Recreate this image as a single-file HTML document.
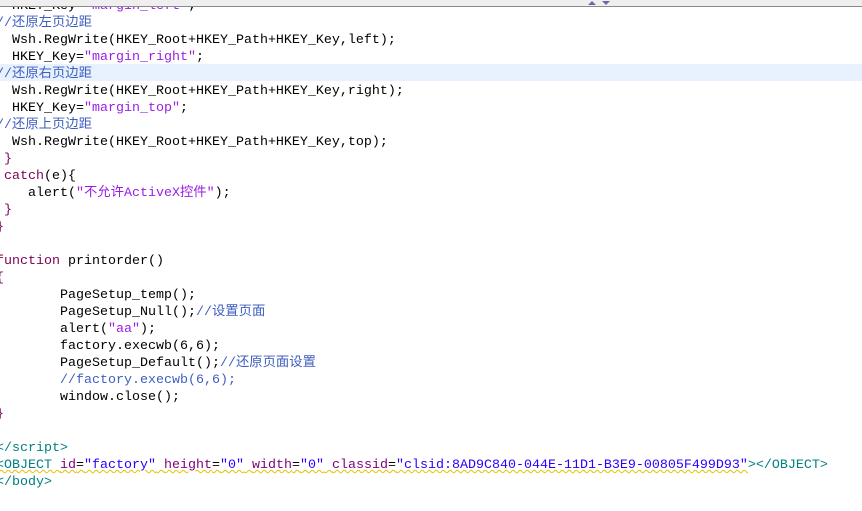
<!DOCTYPE html>
<html><head><meta charset="utf-8"><style>
body{margin:0;width:862px;height:511px;overflow:hidden;background:#fff;position:relative;font-family:"Liberation Mono","Noto Sans CJK SC",monospace;font-size:13.33px;}
.top{position:absolute;left:0;top:0;width:862px;height:6px;background:#efefef;border-bottom:1px solid #8a8a8a;}
.tri{position:absolute;top:1px;width:0;height:0;border-left:4px solid transparent;border-right:4px solid transparent;}
.hl{position:absolute;left:0;top:64px;width:862px;height:17px;background:#e8f2fe;}
pre{position:absolute;left:-4px;top:-2px;margin:0;font:inherit;line-height:17px;color:#000;}
.k{color:#7f0055}.s{color:#9a1ee6}.c{color:#3f5fbf}.t{color:#008080}.a{color:#7f007f}.v{color:#2a00ff}
.sq{text-decoration:underline wavy #e8c000;text-decoration-thickness:1px;}
</style></head><body>
<div class="hl"></div>
<pre>  HKEY_Key=<span class="s">"margin_left"</span>;
<span class="c">//还原左页边距</span>
  Wsh.RegWrite(HKEY_Root+HKEY_Path+HKEY_Key,left);
  HKEY_Key=<span class="s">"margin_right"</span>;
<span class="c">//还原右页边距</span>
  Wsh.RegWrite(HKEY_Root+HKEY_Path+HKEY_Key,right);
  HKEY_Key=<span class="s">"margin_top"</span>;
<span class="c">//还原上页边距</span>
  Wsh.RegWrite(HKEY_Root+HKEY_Path+HKEY_Key,top);
 <span class="k">}</span>
 <span class="k">catch</span>(e){
    alert(<span class="s">"不允许ActiveX控件"</span>);
 <span class="k">}</span>
<span class="k">}</span>

<span class="k">function</span> printorder()
<span class="k">{</span>
        PageSetup_temp();
        PageSetup_Null();<span class="c">//设置页面</span>
        alert(<span class="s">"aa"</span>);
        factory.execwb(6,6);
        PageSetup_Default();<span class="c">//还原页面设置</span>
        <span class="c">//factory.execwb(6,6);</span>
        window.close();
<span class="k">}</span>

<span class="t">&lt;/script&gt;</span>
<span class="sq"><span class="t">&lt;OBJECT</span> <span class="a">id</span>=<span class="v">"factory"</span> <span class="a">height</span>=<span class="v">"0"</span> <span class="a">width</span>=<span class="v">"0"</span> <span class="a">classid</span>=<span class="v">"clsid:8AD9C840-044E-11D1-B3E9-00805F499D93"</span></span><span class="t">&gt;&lt;/OBJECT&gt;</span>
<span class="t">&lt;/body&gt;</span></pre>
<div class="top"><div class="tri" style="left:588px;border-bottom:4px solid #6a6aa8"></div><div class="tri" style="left:602px;border-top:4px solid #6a6aa8"></div></div>
</body></html>
